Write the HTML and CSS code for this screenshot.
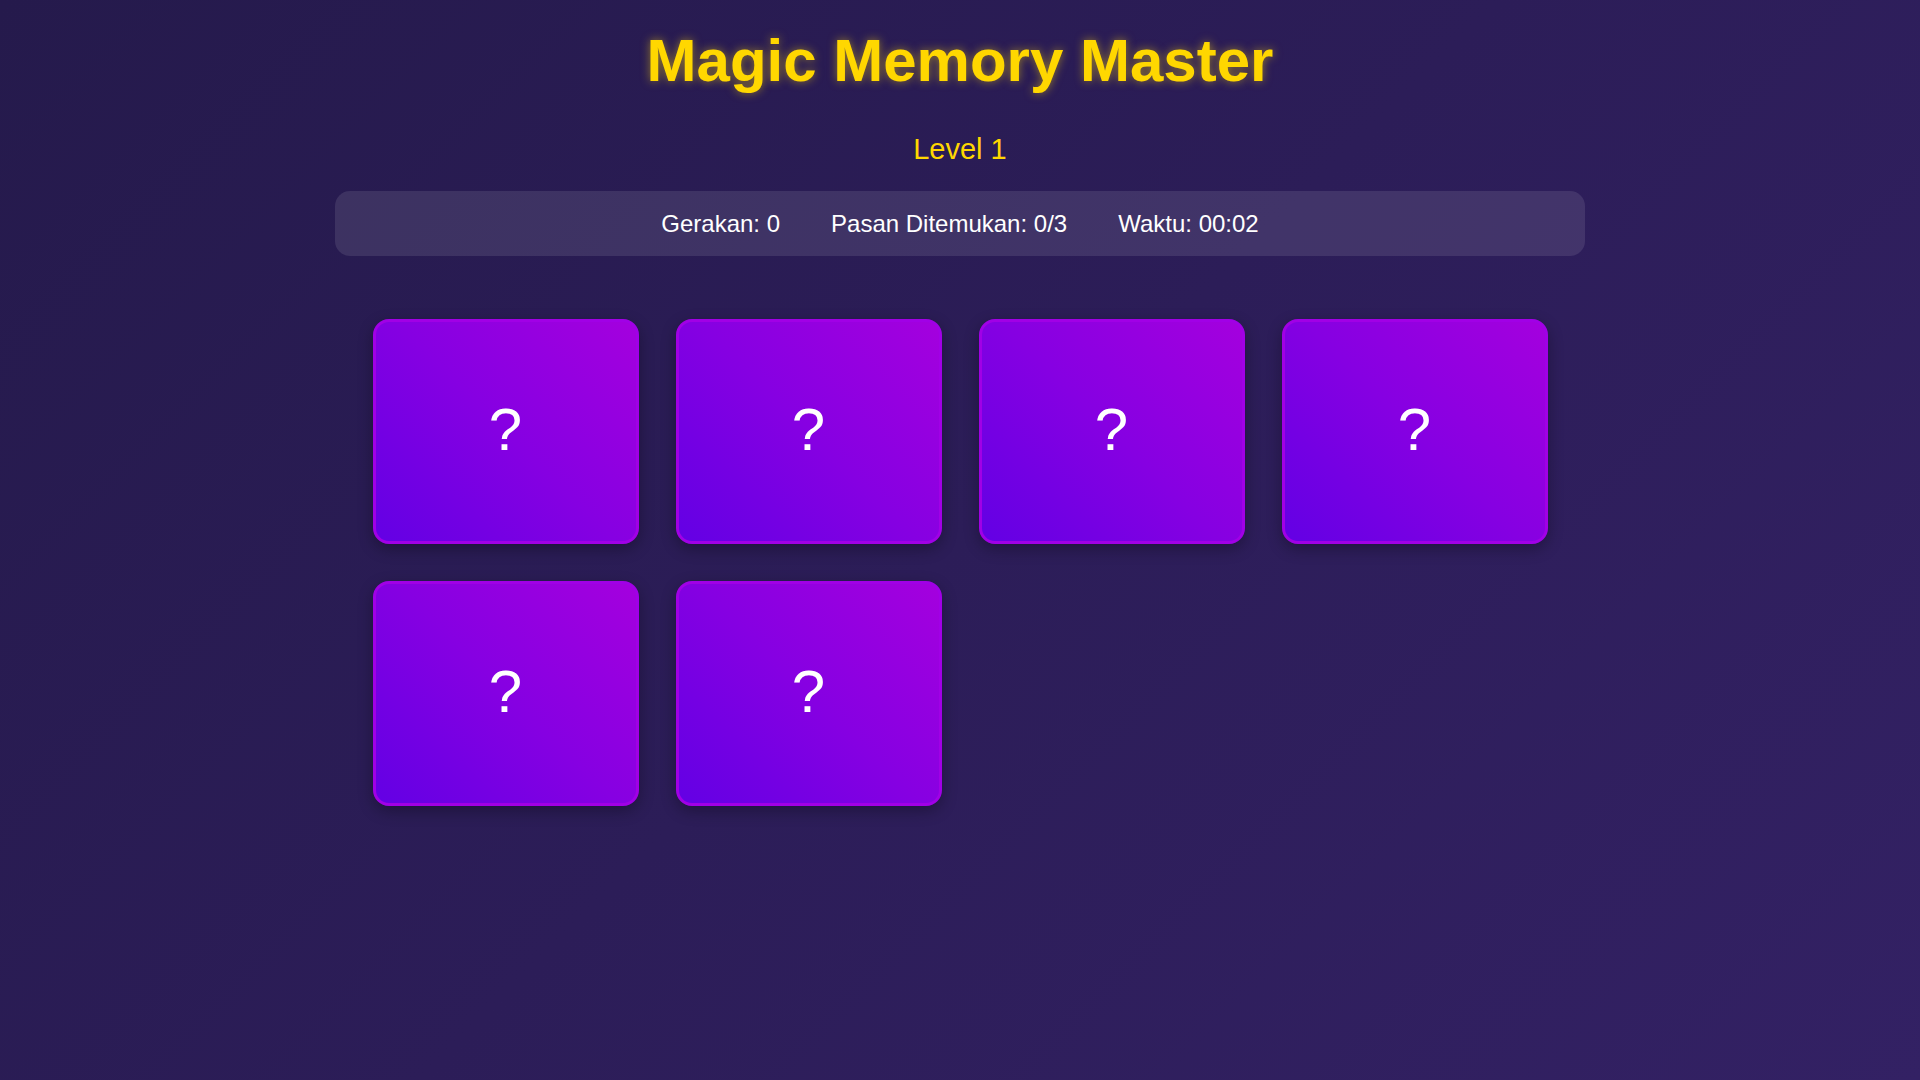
FILE: index.html
```html
<!DOCTYPE html>
<html lang="id">
<head>
<meta charset="utf-8">
<title>Magic Memory Master</title>
<link rel="stylesheet" href="styles.css">
</head>
<body>
<div class="container">
  <h1 class="title">Magic Memory Master</h1>
  <div class="level">Level 1</div>
  <div class="stats">
    <span class="stat">Gerakan: 0</span>
    <span class="stat">Pasan Ditemukan: 0/3</span>
    <span class="stat">Waktu: 00:02</span>
  </div>
  <div class="board">
    <div class="card">?</div>
    <div class="card">?</div>
    <div class="card">?</div>
    <div class="card">?</div>
    <div class="card">?</div>
    <div class="card">?</div>
  </div>
</div>
</body>
</html>
```
FILE: styles.css
```css
html, body {
  margin: 0;
  padding: 0;
  height: 100%;
}
body {
  font-family: "Liberation Sans", Arial, sans-serif;
  background: linear-gradient(135deg, #251a4c 0%, #2c1d58 50%, #332164 100%);
  color: #ffffff;
  min-height: 1080px;
}
.container {
  width: 1250px;
  margin: 0 auto;
  padding-top: 26px;
  display: flex;
  flex-direction: column;
  align-items: center;
}
.title {
  margin: 0;
  font-size: 60px;
  font-weight: bold;
  line-height: 69px;
  color: #ffd700;
  text-shadow: 0 0 10px rgba(255, 215, 0, 0.5);
}
.level {
  margin-top: 38px;
  font-size: 29px;
  line-height: 33px;
  color: #ffd700;
}
.stats {
  margin-top: 25px;
  width: 100%;
  box-sizing: border-box;
  padding: 19px 0;
  border-radius: 15px;
  background: rgba(255, 255, 255, 0.1);
  display: flex;
  justify-content: center;
  gap: 51px;
  font-size: 24px;
  line-height: 27px;
}
.board {
  margin-top: 63px;
  width: 1175px;
  display: grid;
  grid-template-columns: repeat(4, 266px);
  grid-auto-rows: 225px;
  column-gap: 37px;
  row-gap: 37px;
}
.card {
  box-sizing: border-box;
  border: 3px solid #a100e6;
  border-radius: 16px;
  background: linear-gradient(45deg, #6300e4 0%, #8600e2 50%, #a400de 100%);
  box-shadow: 0 5px 15px rgba(0, 0, 0, 0.3);
  display: flex;
  align-items: center;
  justify-content: center;
  padding-bottom: 4px;
  font-size: 60px;
  color: #ffffff;
}
```
